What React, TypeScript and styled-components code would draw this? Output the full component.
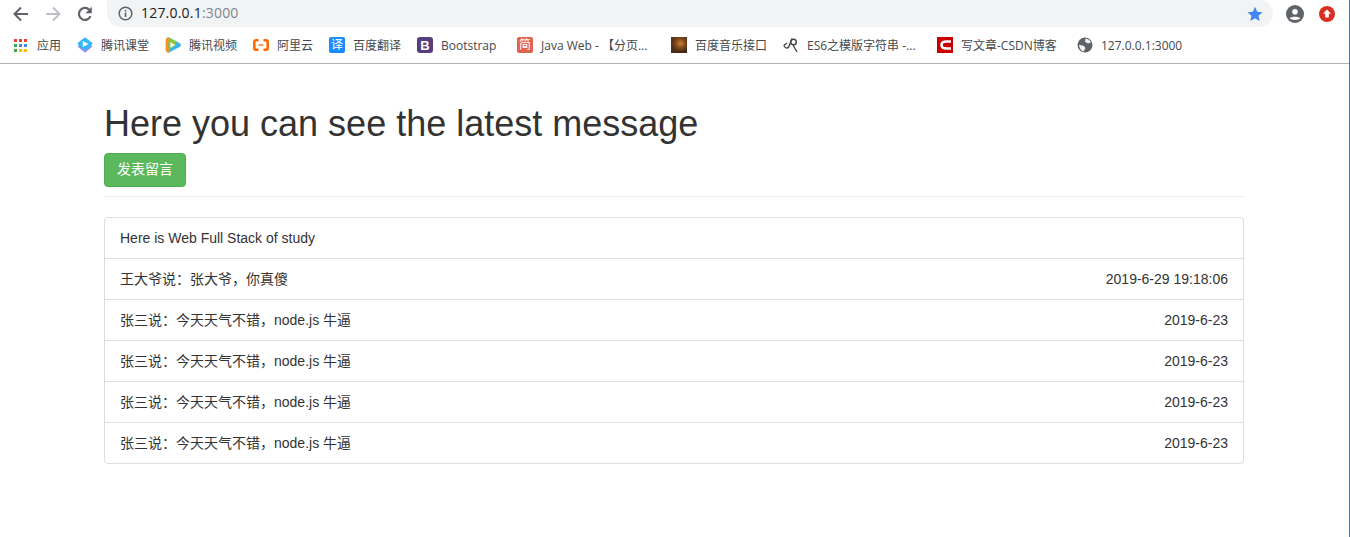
import { FC, ReactNode } from 'react';
import styled, { createGlobalStyle } from 'styled-components';

const GlobalStyle = createGlobalStyle`
  * {
    box-sizing: border-box;
  }

  html,
  body {
    margin: 0;
    padding: 0;
    background: #fff;
  }

  body {
    font-family: 'Liberation Sans', 'Noto Sans CJK SC', Arial, sans-serif;
    font-size: 14px;
    line-height: 1.42857;
    color: #333;
  }
`;

interface Bookmark {
  label: string;
  icon: ReactNode;
  textWidth: number;
}

interface Message {
  text: string;
  date: string;
}

const MESSAGES: Message[] = [
  { text: '王大爷说：张大爷，你真傻', date: '2019-6-29 19:18:06' },
  { text: '张三说：今天天气不错，node.js 牛逼', date: '2019-6-23' },
  { text: '张三说：今天天气不错，node.js 牛逼', date: '2019-6-23' },
  { text: '张三说：今天天气不错，node.js 牛逼', date: '2019-6-23' },
  { text: '张三说：今天天气不错，node.js 牛逼', date: '2019-6-23' },
];

const APP_DOTS = ['#ea4335', '#ea4335', '#ea4335', '#34a853', '#4285f4', '#4285f4', '#34a853', '#fbbc05', '#fbbc05'];

const AppsIcon = () => (
  <svg width="16" height="16" viewBox="0 0 16 16">
    {APP_DOTS.map((color, i) => (
      <rect key={i} x={(i % 3) * 5 + 1} y={Math.floor(i / 3) * 5 + 2} width="3" height="3" fill={color} />
    ))}
  </svg>
);

const KetangIcon = () => (
  <svg width="16" height="16" viewBox="0 0 16 16">
    <path d="M8 6 15.500 9.500 8 15.800.5 9.500z" fill="#9a8cf0" />
    <path d="M8 .2 15.500 6 14 9.500 8 13.500 2 9.500.5 6z" fill="#35b8f8" />
    <path d="M5.800 4 11.500 7 5.800 10z" fill="#fff" />
  </svg>
);

const VideoIcon = () => (
  <svg width="16" height="16" viewBox="0 0 16 16">
    <path d="M.8 3C.8.8 2.800 0 4.500.8l10 5.200c1.800 1 1.800 3 0 4l-10 5.200C2.800 16 .8 15.200.8 13z" fill="#35b5f0" />
    <path d="M.8 3C.8.8 2.800 0 4.500.8L3.500 8l1 7.200C2.800 16 .8 15.200.8 13z" fill="#f7941d" />
    <path d="M3.800.5 12.500 5 3.800 11.500z" fill="#8cc63f" />
    <path d="M3.800 3.500 11.500 8 3.800 12.500z" fill="#8cc63f" />
    <path d="M5.500 5.300 10 8 5.500 10.700z" fill="#fff" />
  </svg>
);

const AliyunIcon = () => (
  <svg width="16" height="16" viewBox="0 0 16 16" fill="none" stroke="#ff6a00" strokeWidth="2.600">
    <path d="M5.500 3.200H3.300Q1.300 3.200 1.300 5.200v5.600q0 2 2 2h2.200" />
    <path d="M10.500 3.200h2.200q2 0 2 2v5.600q0 2-2 2h-2.200" />
    <path d="M5.500 8h5" strokeWidth="1.300" />
  </svg>
);

const GlobeIcon = () => (
  <svg width="16" height="16" viewBox="0 0 16 16">
    <circle cx="8" cy="8" r="7.500" fill="#5f6368" />
    <path d="M8.500 1.500C11 1.800 13 3.300 14 5.500L11 6.500 8 4.800z" fill="#fff" opacity="0.9" />
    <path d="M2 7.800 6.500 8.800 8.500 11 6.500 14.500C4 14 2.300 11 2 7.800z" fill="#fff" opacity="0.9" />
  </svg>
);

const EsIcon = () => (
  <svg width="16" height="16" viewBox="0 0 16 16" fill="none" stroke="#444" strokeWidth="1.400">
    <path d="M.8 8.500C3 12.500 5.500 11.500 6.500 8L9 1.500" />
    <circle cx="10.500" cy="5" r="2.800" />
    <path d="M10 8 14 15" />
    <path d="M.8 8.500 4 6" />
  </svg>
);

const CsdnIcon = () => (
  <svg width="16" height="16" viewBox="0 0 16 16">
    <rect width="16" height="16" fill="#c90000" />
    <path d="M14 4.500H9.500Q4.500 4.500 4.500 8t5 3.500H14" fill="none" stroke="#fff" strokeWidth="2.600" />
  </svg>
);

const BOOKMARKS: Bookmark[] = [
  { label: '应用', icon: <AppsIcon />, textWidth: 24 },
  { label: '腾讯课堂', icon: <KetangIcon />, textWidth: 48 },
  { label: '腾讯视频', icon: <VideoIcon />, textWidth: 48 },
  { label: '阿里云', icon: <AliyunIcon />, textWidth: 36 },
  { label: '百度翻译', icon: <Tile $bg="#1a8cff" $radius={2}>译</Tile>, textWidth: 48 },
  { label: 'Bootstrap', icon: <Tile $bg="#563d7c" $radius={3} $bold>B</Tile>, textWidth: 60 },
  { label: 'Java Web - 【分页...', icon: <Tile $bg="#e0624a" $radius={2}>简</Tile>, textWidth: 114 },
  { label: '百度音乐接口', icon: <PhotoTile />, textWidth: 72 },
  { label: 'ES6之模版字符串 -...', icon: <EsIcon />, textWidth: 114 },
  { label: '写文章-CSDN博客', icon: <CsdnIcon />, textWidth: 100 },
  { label: '127.0.0.1:3000', icon: <GlobeIcon />, textWidth: 84 },
];

const App: FC = () => (
  <PageStyled>
    <GlobalStyle />
    <BrowserChrome>
      <ToolbarStyled>
        <NavButtons>
          <svg width="16" height="16" viewBox="0 0 16 16" fill="none" stroke="#5f6368" strokeWidth="2">
            <path d="M15 8H2M8 1.500 1.500 8 8 14.500" />
          </svg>
          <svg width="16" height="16" viewBox="0 0 16 16" fill="none" stroke="#bdc1c6" strokeWidth="2">
            <path d="M1 8h13M8 1.500 14.500 8 8 14.500" />
          </svg>
          <svg width="16" height="16" viewBox="0 0 16 16" fill="none" stroke="#5f6368" strokeWidth="2.200">
            <path d="M13.500 10.200A6 6 0 1 1 12.300 3.800" />
            <path d="M14.800.8v6.400H8.400z" fill="#5f6368" stroke="none" />
          </svg>
        </NavButtons>
        <Omnibox>
          <svg width="15" height="15" viewBox="0 0 15 15">
            <circle cx="7.500" cy="7.500" r="6.300" fill="none" stroke="#5f6368" strokeWidth="1.500" />
            <rect x="6.700" y="6.500" width="1.600" height="4.500" fill="#5f6368" />
            <rect x="6.700" y="3.900" width="1.600" height="1.600" fill="#5f6368" />
          </svg>
          <UrlText>
            127.0.0.1<UrlPort>:3000</UrlPort>
          </UrlText>
          <svg width="16" height="16" viewBox="0 0 16 16">
            <path d="M8 .8 10.200 5.700 15.500 6.200 11.500 9.800 12.700 15 8 12.300 3.300 15 4.500 9.800.5 6.200 5.800 5.700z" fill="#4285f4" />
          </svg>
        </Omnibox>
        <ToolbarActions>
          <svg width="18" height="18" viewBox="0 0 18 18">
            <circle cx="9" cy="9" r="9" fill="#5f6368" />
            <circle cx="9" cy="6.800" r="2.800" fill="#fff" />
            <path d="M3.800 13.300C5 11.300 13 11.300 14.200 13.300 12.800 15.600 5.200 15.600 3.800 13.300z" fill="#fff" />
          </svg>
          <svg width="16" height="16" viewBox="0 0 16 16">
            <circle cx="8" cy="8" r="8" fill="#d93025" />
            <path d="M8 3.500 12 7.800H9.800V11.500H6.200V7.800H4z" fill="#fff" />
          </svg>
        </ToolbarActions>
      </ToolbarStyled>
      <BookmarkBar>
        {BOOKMARKS.map((item) => (
          <BookmarkItem key={item.label}>
            <BookmarkIcon>{item.icon}</BookmarkIcon>
            <BookmarkLabel $width={item.textWidth}>{item.label}</BookmarkLabel>
          </BookmarkItem>
        ))}
      </BookmarkBar>
    </BrowserChrome>

    <ContainerStyled>
      <PageHeader>
        <TitleStyled>Here you can see the latest message</TitleStyled>
        <PostButton>发表留言</PostButton>
      </PageHeader>
      <ListStyled>
        <ListRow>Here is Web Full Stack of study</ListRow>
        {MESSAGES.map((message, i) => (
          <ListRow key={i}>
            <span>{message.text}</span>
            <span>{message.date}</span>
          </ListRow>
        ))}
      </ListStyled>
    </ContainerStyled>
  </PageStyled>
);

function Tile({ $bg, $radius, $bold, children }: { $bg: string; $radius: number; $bold?: boolean; children: ReactNode }) {
  return (
    <TileStyled $bg={$bg} $radius={$radius} $bold={$bold}>
      {children}
    </TileStyled>
  );
}

function PhotoTile() {
  return <PhotoStyled />;
}

const PageStyled = styled.div`
  width: 1350px;
  height: 537px;
  overflow: hidden;
  background: #fff;
  border-right: 1px solid #2b7cd3;
`;

const BrowserChrome = styled.header`
  height: 64px;
  border-bottom: 1px solid #b4b4b4;
`;

const ToolbarStyled = styled.div`
  display: flex;
  height: 27px;
  padding-left: 13px;
`;

const NavButtons = styled.div`
  display: flex;
  align-items: center;
  gap: 16px;
  margin-right: 14px;
`;

const Omnibox = styled.div`
  display: flex;
  align-items: center;
  width: 1166px;
  height: 27px;
  padding: 0 10px 0 11px;
  background: #f1f3f4;
  border-radius: 0 14px 14px 14px;
`;

const UrlText = styled.span`
  flex: 1;
  margin-left: 8px;
  margin-top: -2px;
  font-family: 'Open Sans', 'Noto Sans', sans-serif;
  font-size: 14px;
  letter-spacing: 0.2px;
  color: #202124;
`;

const UrlPort = styled.span`
  color: #80868b;
`;

const ToolbarActions = styled.div`
  display: flex;
  align-items: center;
  gap: 15px;
  margin-left: 13px;
`;

const BookmarkBar = styled.nav`
  display: flex;
  align-items: center;
  height: 36px;
  padding: 1px 0 0 13px;
  gap: 16px;
`;

const BookmarkItem = styled.div`
  display: flex;
  align-items: center;
  gap: 8px;
`;

const BookmarkIcon = styled.span`
  display: flex;
  width: 16px;
  height: 16px;
  align-items: center;
  justify-content: center;
`;

const BookmarkLabel = styled.span<{ $width: number }>`
  width: ${({ $width }) => $width}px;
  font-family: 'Open Sans', 'Noto Sans CJK SC', sans-serif;
  font-size: 12px;
  white-space: nowrap;
  color: #44484c;
`;

const TileStyled = styled.span<{ $bg: string; $radius: number; $bold?: boolean }>`
  display: flex;
  width: 16px;
  height: 16px;
  align-items: center;
  justify-content: center;
  background: ${({ $bg }) => $bg};
  border-radius: ${({ $radius }) => $radius}px;
  font-size: ${({ $bold }) => ($bold ? 13 : 12)}px;
  font-weight: ${({ $bold }) => ($bold ? 700 : 400)};
  line-height: 1;
  color: #fff;
`;

const PhotoStyled = styled.span`
  display: block;
  width: 16px;
  height: 16px;
  background:
    radial-gradient(circle at 60% 40%, #c8802f 0, rgba(150, 85, 30, 0.7) 35%, transparent 65%),
    linear-gradient(135deg, #5a3518, #3d2412);
`;

const ContainerStyled = styled.main`
  width: 1140px;
  margin-left: 104px;
`;

const PageHeader = styled.div`
  padding-top: 40px;
  padding-bottom: 9px;
  margin-bottom: 20px;
  border-bottom: 1px solid #eee;
`;

const TitleStyled = styled.h1`
  margin: 0 0 9px;
  font-size: 36px;
  font-weight: 500;
  line-height: 40px;
  color: #333;
`;

const PostButton = styled.button`
  display: block;
  height: 34px;
  padding: 6px 12px;
  font: inherit;
  color: #fff;
  background: #5cb85c;
  border: 1px solid #4cae4c;
  border-radius: 4px;
`;

const ListStyled = styled.div`
  border: 1px solid #ddd;
  border-radius: 4px;
`;

const ListRow = styled.div`
  display: flex;
  justify-content: space-between;
  height: 41px;
  padding: 11px 15px 9px;
  border-bottom: 1px solid #ddd;

  &:last-child {
    height: 40px;
    border-bottom: 0;
  }
`;

export default App;
